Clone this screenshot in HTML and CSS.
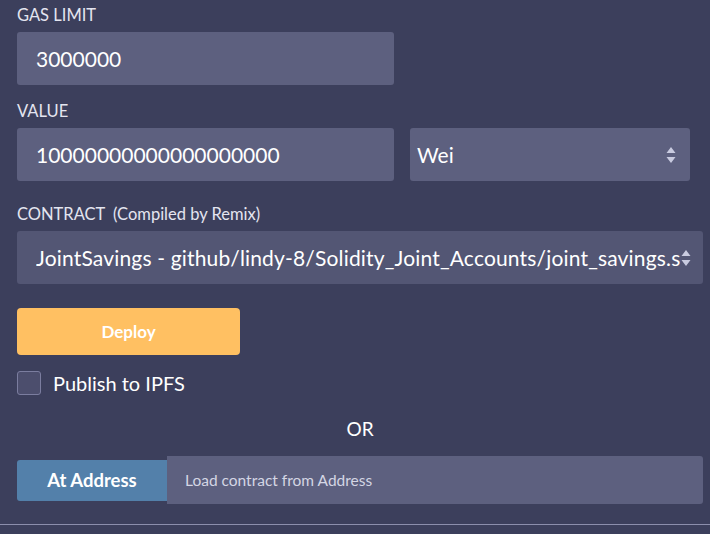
FILE: index.html
```html
<!DOCTYPE html>
<html>
<head>
<meta charset="utf-8">
<link rel="stylesheet" href="styles.css">
</head>
<body>
<div class="panel">
  <div class="field">
    <div class="label">GAS LIMIT</div>
    <div class="row">
      <div class="input w377">3000000</div>
    </div>
  </div>
  <div class="field">
    <div class="label">VALUE</div>
    <div class="row gap16">
      <div class="input w377">10000000000000000000</div>
      <div class="select w280">
        <span>Wei</span>
        <svg class="arrows" width="10" height="18" viewBox="0 0 10 18"><path d="M5 1 L9.5 7 H0.5 Z M5 17 L9.5 11 H0.5 Z" fill="#c9cbe0"/></svg>
      </div>
    </div>
  </div>
  <div class="field contract">
    <div class="label">CONTRACT <span class="sub">(Compiled by Remix)</span></div>
    <div class="select full dark">
      <span class="clip">JointSavings - github/lindy-8/Solidity_Joint_Accounts/joint_savings.sol</span>
      <svg class="arrows" width="10" height="18" viewBox="0 0 10 18"><path d="M5 1 L9.5 7 H0.5 Z M5 17 L9.5 11 H0.5 Z" fill="#c9cbe0"/></svg>
    </div>
  </div>
  <div class="deploy">Deploy</div>
  <label class="check"><span class="box"></span><span>Publish to IPFS</span></label>
  <div class="or">OR</div>
  <div class="ataddr">
    <div class="atbtn">At Address</div>
    <div class="atinput">Load contract from Address</div>
  </div>
</div>
<div class="rule"></div>
</body>
</html>
```
FILE: styles.css
```css
html, body {
  margin: 0;
  padding: 0;
  background: #3c3f5c;
  font-family: Lato, "Open Sans", sans-serif;
  color: #ffffff;
  width: 710px;
  height: 534px;
  overflow: hidden;
}
.panel {
  padding: 4px 7px 0 17px;
  height: 524px;
  box-sizing: border-box;
}
.field {
  margin-bottom: 15px;
}
.field.contract {
  margin-top: 22px;
  margin-bottom: 24px;
}
.label {
  font-size: 16.5px;
  line-height: 22px;
  color: #e4e5f0;
  margin-bottom: 6px;
}
.label .sub {
  font-size: 16.5px;
  margin-left: 4px;
}
.row {
  display: flex;
}
.gap16 { gap: 16px; }
.input, .select {
  height: 53px;
  box-sizing: border-box;
  background: #5d607f;
  border-radius: 3px;
  font-size: 21px;
  display: flex;
  align-items: center;
  padding-left: 19px;
  color: #ffffff;
}
.w377 { width: 377px; }
.w280 { width: 280px; padding-left: 7px; justify-content: space-between; padding-right: 14px; }
.select.full {
  width: 686px;
  justify-content: space-between;
  padding-right: 12px;
}
.select.dark { background: #535674; }
.clip {
  white-space: nowrap;
  overflow: hidden;
  width: 648px;
  letter-spacing: 0.17px;
}
.arrows { flex: none; }
.deploy {
  width: 223px;
  height: 47px;
  background: #ffc062;
  border-radius: 4px;
  display: flex;
  align-items: center;
  justify-content: center;
  font-weight: 700;
  font-size: 17px;
  color: #ffffff;
}
.check {
  display: flex;
  align-items: center;
  margin-top: 16px;
  font-size: 20px;
  gap: 12px;
}
.box {
  width: 24px;
  height: 24px;
  box-sizing: border-box;
  border: 1px solid #7b7d9f;
  background: #4c4e6d;
  border-radius: 3px;
}
.or {
  text-align: center;
  font-size: 19px;
  margin-top: 23px;
  line-height: 22px;
}
.ataddr {
  display: flex;
  align-items: center;
  margin-top: 16px;
}
.atbtn {
  width: 150px;
  height: 41px;
  background: #5380aa;
  border-radius: 3px 0 0 3px;
  font-weight: 700;
  font-size: 18.5px;
  display: flex;
  align-items: center;
  justify-content: center;
}
.atinput {
  flex: 1;
  height: 48px;
  background: #5d607f;
  border-radius: 0 3px 3px 0;
  font-size: 15.5px;
  color: #d4d6e4;
  display: flex;
  align-items: center;
  padding-left: 18px;
}
.rule {
  height: 1px;
  background: #8c8eac;
}
```
